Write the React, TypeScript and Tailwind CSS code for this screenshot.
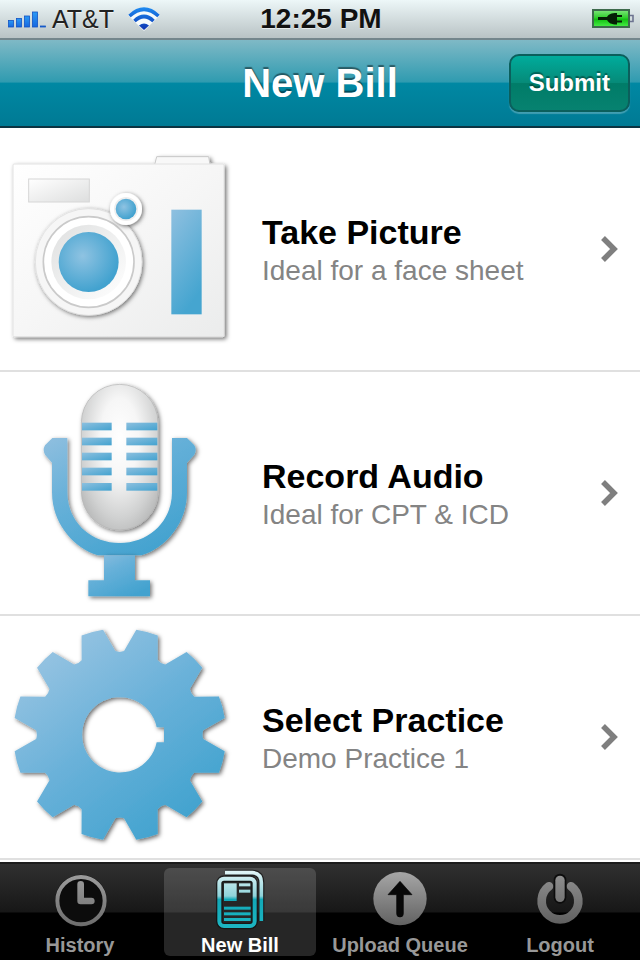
import type { ReactNode } from "react"

const GEAR_CENTER = 359

function gearPoint(radius: number, degrees: number) {
    const angle = (degrees * Math.PI) / 180
    const x = GEAR_CENTER + radius * Math.sin(angle)
    const y = GEAR_CENTER - radius * Math.cos(angle)
    return `${x.toFixed(1)} ${y.toFixed(1)}`
}

// twelve teeth, then the bore with its keyway cut out by even-odd fill
function gearPath() {
    let d = ""
    for (let i = 0; i < 12; i++) {
        const mid = 15 + i * 30
        d += `${i === 0 ? "M" : "L"}${gearPoint(319, mid - 6)}`
        d += `A319 319 0 0 1 ${gearPoint(319, mid + 6)}`
        d += `L${gearPoint(251, mid + 12)}`
        d += `Q${gearPoint(246, mid + 15)} ${gearPoint(251, mid + 18)}`
    }
    return d + "Z M470 337A113 113 0 1 0 470 382H492V337Z"
}

function CameraIcon() {
    return (
        <svg viewBox="0 -36 720 726" className="w-[240px] shrink-0" aria-hidden="true">
            <defs>
                <linearGradient id="camBody" x1="0" y1="0" x2="1" y2="1">
                    <stop offset="0" stopColor="#ffffff" />
                    <stop offset="0.5" stopColor="#f6f6f6" />
                    <stop offset="1" stopColor="#ebecec" />
                </linearGradient>
                <linearGradient id="camWindow" x1="0" y1="0" x2="1" y2="1">
                    <stop offset="0" stopColor="#ffffff" />
                    <stop offset="1" stopColor="#dddede" />
                </linearGradient>
                <linearGradient id="camGrip" x1="0" y1="0" x2="0.4" y2="1">
                    <stop offset="0" stopColor="#8fc0e0" />
                    <stop offset="1" stopColor="#45a5d0" />
                </linearGradient>
                <radialGradient id="camLens" cx="0.4" cy="0.4" r="0.6">
                    <stop offset="0" stopColor="#8fc3e2" />
                    <stop offset="1" stopColor="#42a2cf" />
                </radialGradient>
                <linearGradient id="camRing" x1="0" y1="0" x2="1" y2="1">
                    <stop offset="0" stopColor="#dfe0e0" />
                    <stop offset="1" stopColor="#ffffff" />
                </linearGradient>
                <filter id="camShadow" x="-10%" y="-10%" width="125%" height="125%">
                    <feDropShadow dx="6" dy="6" stdDeviation="6" floodColor="#000" floodOpacity="0.55" />
                </filter>
                <filter id="camSoft" x="-15%" y="-15%" width="135%" height="135%">
                    <feDropShadow dx="4" dy="4" stdDeviation="6" floodColor="#000" floodOpacity="0.55" />
                </filter>
            </defs>
            <g filter="url(#camShadow)">
                <path d="M464 74L470 50H626L630 74Z" fill="#f8f8f8" stroke="#c9c9c9" strokeWidth="3" />
                <rect x="39" y="72" width="633" height="518" rx="3" fill="url(#camBody)" stroke="#e2e2e2" strokeWidth="3" />
            </g>
            <rect x="86" y="117" width="182" height="69" fill="url(#camWindow)" stroke="#d6d6d6" strokeWidth="3" />
            <circle cx="266" cy="366" r="160" fill="#f6f6f6" stroke="#dcdcdc" strokeWidth="2" filter="url(#camSoft)" />
            <circle cx="266" cy="366" r="136" fill="#fff" stroke="#cacaca" strokeWidth="5" />
            <circle cx="378" cy="207" r="48" fill="#fff" filter="url(#camSoft)" />
            <circle cx="266" cy="366" r="112" fill="url(#camRing)" />
            <circle cx="266" cy="366" r="90" fill="url(#camLens)" />
            <circle cx="378" cy="207" r="36" fill="#eee" />
            <circle cx="378" cy="207" r="31" fill="url(#camLens)" />
            <rect x="514" y="209" width="91" height="314" fill="url(#camGrip)" />
        </svg>
    )
}

function MicrophoneIcon() {
    return (
        <svg viewBox="-60 6 720 726" className="w-[240px] shrink-0" aria-hidden="true">
            <defs>
                <linearGradient id="micBlue" x1="0" y1="0" x2="0.7" y2="1">
                    <stop offset="0" stopColor="#90bfdf" />
                    <stop offset="0.4" stopColor="#68b1d9" />
                    <stop offset="1" stopColor="#42a2cf" />
                </linearGradient>
                <radialGradient id="micHead" gradientUnits="userSpaceOnUse" cx="0" cy="0" r="1" gradientTransform="translate(299 205) scale(145 300)">
                    <stop offset="0" stopColor="#ffffff" />
                    <stop offset="0.4" stopColor="#f6f6f6" />
                    <stop offset="0.8" stopColor="#d0d1d1" />
                    <stop offset="1" stopColor="#b9baba" />
                </radialGradient>
                <linearGradient id="micSlot" x1="0" y1="0" x2="1" y2="1">
                    <stop offset="0" stopColor="#8dc0df" />
                    <stop offset="1" stopColor="#43a2cf" />
                </linearGradient>
                <filter id="micShadow" x="-10%" y="-10%" width="125%" height="125%">
                    <feDropShadow dx="5" dy="5" stdDeviation="6" floodColor="#000" floodOpacity="0.55" />
                </filter>
            </defs>
            <path d="M97 204H142V367C142 453 210 519 299 519S456 453 456 367V204H501L523 226Q531 240 523 254L501 278V367C501 458 440 532 365 556H233C158 532 96 458 96 367V278L75 254Q67 240 75 226Z" fill="url(#micBlue)" filter="url(#micShadow)" />
            <path d="M252 556H345V631H390V679H205V631H252Z" fill="url(#micBlue)" filter="url(#micShadow)" />
            <rect x="184" y="43" width="230" height="437" rx="115" fill="url(#micHead)" stroke="#b4b4b4" strokeWidth="2" filter="url(#micShadow)" />
            {[158, 203, 248, 293, 339].map((y) => (
                <g key={y} fill="url(#micSlot)">
                    <rect x="186" y={y} width="89" height="23" />
                    <rect x="319" y={y} width="93" height="23" />
                </g>
            ))}
        </svg>
    )
}

function GearIcon() {
    return (
        <svg viewBox="0 3 720 726" className="w-[240px] shrink-0" aria-hidden="true">
            <defs>
                <linearGradient id="gearBlue" x1="0.1" y1="0.1" x2="0.75" y2="0.95">
                    <stop offset="0" stopColor="#98c4e2" />
                    <stop offset="0.5" stopColor="#69b1d9" />
                    <stop offset="1" stopColor="#42a3cf" />
                </linearGradient>
                <filter id="gearShadow" x="-10%" y="-10%" width="120%" height="120%">
                    <feDropShadow dx="5" dy="5" stdDeviation="6" floodColor="#000" floodOpacity="0.6" />
                </filter>
            </defs>
            <path d={gearPath()} fillRule="evenodd" fill="url(#gearBlue)" filter="url(#gearShadow)" />
        </svg>
    )
}

function SignalIcon() {
    return (
        <svg viewBox="0 0 40 20" className="h-5 w-10" aria-hidden="true">
            <defs>
                <linearGradient id="signal" x1="0" y1="0" x2="0" y2="1">
                    <stop offset="0" stopColor="#2a9af5" />
                    <stop offset="1" stopColor="#1667e0" />
                </linearGradient>
            </defs>
            <g fill="url(#signal)" stroke="#1253c4" strokeWidth="0.8">
                <rect x="0.5" y="11.5" width="5" height="6.5" />
                <rect x="8.5" y="9.5" width="5" height="8.5" />
                <rect x="16.5" y="7" width="5" height="11" />
                <rect x="24.5" y="3" width="5" height="15" />
                <rect x="32.5" y="17" width="5" height="1" />
            </g>
        </svg>
    )
}

function WifiIcon() {
    return (
        <svg viewBox="0 0 32 24" className="h-6 w-8" aria-hidden="true">
            <defs>
                <linearGradient id="wifi" x1="0" y1="0" x2="0" y2="24" gradientUnits="userSpaceOnUse">
                    <stop offset="0" stopColor="#1e8cf2" />
                    <stop offset="1" stopColor="#0a2fae" />
                </linearGradient>
            </defs>
            <path d="M0 8Q16 -7 32 8L16 24Z" fill="#f5fafb" />
            <g fill="none" stroke="url(#wifi)" strokeWidth="3.6">
                <path d="M1.500 9Q16 -4.500 30.500 9" />
                <path d="M6.500 14Q16 5 25.500 14" />
            </g>
            <path d="M11 18.500Q16 14.500 21 18.500L16 23Z" fill="url(#wifi)" />
        </svg>
    )
}

function BatteryIcon() {
    return (
        <svg viewBox="0 0 44 22" className="h-[22px] w-11" aria-hidden="true">
            <defs>
                <linearGradient id="battery" x1="0" y1="0" x2="0" y2="1">
                    <stop offset="0" stopColor="#7fe67c" />
                    <stop offset="0.45" stopColor="#2fcf2c" />
                    <stop offset="0.55" stopColor="#12c012" />
                    <stop offset="1" stopColor="#4af04a" />
                </linearGradient>
            </defs>
            <rect x="3" y="2" width="36" height="17" fill="url(#battery)" stroke="#3d6a4c" strokeWidth="2" />
            <path d="M40 7.500H43V13.500H40" fill="none" stroke="#6d7390" strokeWidth="1.6" />
            <path d="M8 9H17C19 6 21 5 27 5V7H32V9H27V12.500H32V14.500H27V16.500C21 16.500 19 15 17 12H8Z" fill="#052005" />
        </svg>
    )
}

function ClockIcon() {
    return (
        <svg viewBox="144 54 192 192" className="size-16" aria-hidden="true">
            <defs>
                <linearGradient id="clock" gradientUnits="userSpaceOnUse" x1="0" y1="75" x2="0" y2="230">
                    <stop offset="0" stopColor="#9c9c9c" />
                    <stop offset="1" stopColor="#6c6c6c" />
                </linearGradient>
            </defs>
            <circle cx="243" cy="152" r="78" fill="#0c0c0c" />
            <g fill="none" stroke="url(#clock)">
                <circle cx="243" cy="152" r="71" strokeWidth="12" />
                <path d="M242 103V153H274" strokeWidth="20" strokeLinecap="round" strokeLinejoin="round" />
            </g>
        </svg>
    )
}

function NewsIcon() {
    return (
        <svg viewBox="624 54 192 192" className="size-16" aria-hidden="true">
            <defs>
                <linearGradient id="news" gradientUnits="userSpaceOnUse" x1="0" y1="62" x2="0" y2="235">
                    <stop offset="0" stopColor="#e2f6f8" />
                    <stop offset="0.44" stopColor="#8fd3da" />
                    <stop offset="0.5" stopColor="#12a9b8" />
                    <stop offset="1" stopColor="#1db5c2" />
                </linearGradient>
            </defs>
            <g fill="none" stroke="#101010" strokeOpacity="0.7" strokeLinejoin="round">
                <path d="M675 68H757Q784 70 784 98V213" strokeWidth="18" />
                <rect x="658" y="86" width="106" height="142" rx="14" strokeWidth="20" fill="#262626" />
            </g>
            <g fill="none" stroke="url(#news)">
                <path d="M675 68H757Q784 70 784 98V213" strokeWidth="11" />
                <rect x="658" y="86" width="106" height="142" rx="14" strokeWidth="12" />
            </g>
            <g fill="url(#news)">
                <rect x="672" y="100" width="38" height="53" />
                <rect x="717" y="100" width="34" height="9" />
                <rect x="717" y="119" width="34" height="9" />
                <rect x="672" y="170" width="80" height="9" />
                <rect x="672" y="187" width="80" height="9" />
                <rect x="672" y="204" width="80" height="9" />
            </g>
        </svg>
    )
}

function UploadIcon() {
    return (
        <svg viewBox="144 54 192 192" className="size-16" aria-hidden="true">
            <defs>
                <linearGradient id="upload" x1="0" y1="0" x2="0" y2="1">
                    <stop offset="0" stopColor="#a6a6a6" />
                    <stop offset="1" stopColor="#626262" />
                </linearGradient>
            </defs>
            <circle cx="240" cy="146" r="80" fill="url(#upload)" />
            <path d="M240 94L276 134H250V191Q250 201 240 201T230 191V134H204Z" fill="#080808" stroke="#080808" strokeWidth="2" strokeLinejoin="round" />
        </svg>
    )
}

function PowerIcon() {
    return (
        <svg viewBox="624 54 192 192" className="size-16" aria-hidden="true">
            <defs>
                <linearGradient id="power" gradientUnits="userSpaceOnUse" x1="0" y1="76" x2="0" y2="222">
                    <stop offset="0" stopColor="#8e8e8e" />
                    <stop offset="1" stopColor="#606060" />
                </linearGradient>
            </defs>
            <g fill="none" stroke="url(#power)" strokeLinecap="round">
                <path d="M687 109A55 55 0 1 0 753 109" strokeWidth="26" />
            </g>
            <path d="M720 90V142" fill="none" stroke="#0c0c0c" strokeWidth="38" strokeLinecap="round" />
            <rect x="706" y="77" width="28" height="79" rx="14" fill="url(#power)" />
        </svg>
    )
}

function Row({ icon, title, detail }: { icon: ReactNode; title: string; detail: string }) {
    return (
        <li className="border-b-2 border-[#e0e0e0]">
            <button type="button" className="flex w-full items-center text-left">
                {icon}
                <span className="ml-[22px] flex-1 pt-1">
                    <span className="block text-[34px] leading-10 font-bold text-black">{title}</span>
                    <span className="block text-[28px] leading-[38px] text-[#848484]">{detail}</span>
                </span>
                <svg viewBox="0 0 20 28" className="mr-5 h-7 w-5 shrink-0" aria-hidden="true">
                    <path d="M3 3L14 14L3 25" fill="none" stroke="#7f7f7f" strokeWidth="5.5" />
                </svg>
            </button>
        </li>
    )
}

function Tab({ icon, label, active = false }: { icon: ReactNode; label: string; active?: boolean }) {
    return (
        <button
            type="button"
            aria-current={active ? "page" : undefined}
            className={
                active
                    ? "mx-1 flex flex-col items-center rounded-md bg-white/15 text-white"
                    : "mx-1 flex flex-col items-center text-[#989898]"
            }
        >
            {icon}
            <span className="pt-0.5 text-[20px] leading-[22px] font-bold whitespace-nowrap">{label}</span>
        </button>
    )
}

export default function App() {
    return (
        <div className="flex min-h-screen flex-col bg-white font-['Liberation_Sans',Arial,sans-serif]">
            {/* Status bar */}
            <div className="grid h-10 grid-cols-3 items-center border-b-2 border-[#74868c] bg-linear-to-b from-[#edf7f8] to-[#b9c3c5] pr-1.5 pl-2">
                <div className="flex items-center">
                    <SignalIcon />
                    <span className="ml-1 text-[25px] leading-8 text-[#222] [text-shadow:0_1px_0_rgba(255,255,255,0.6)]">AT&amp;T</span>
                    <span className="ml-3.5">
                        <WifiIcon />
                    </span>
                </div>
                <span className="text-center text-[28px] leading-8 font-bold text-[#111] [text-shadow:0_1px_0_rgba(255,255,255,0.6)]">12:25 PM</span>
                <span className="justify-self-end">
                    <BatteryIcon />
                </span>
            </div>

            {/* Navigation bar */}
            <header className="grid h-[88px] grid-cols-[1fr_auto_1fr] items-center border-b-2 border-[#0c3442] bg-[linear-gradient(to_bottom,#7fb9c6_0%,#2f9bb0_49%,#0088a3_50%,#007a94_100%)] px-2.5">
                <h1 className="col-start-2 text-[40px] leading-none font-bold text-white [text-shadow:0_-2px_1px_rgba(0,0,0,0.45)]">New Bill</h1>
                <button
                    type="button"
                    className="h-[58px] justify-self-end rounded-[10px] border-2 border-[#0b5f5c] bg-[linear-gradient(to_bottom,#00ac9c_0%,#068a78_50%,#007c68_51%,#078270_100%)] px-[18px] text-[24px] leading-none font-bold text-white shadow-[0_2px_1px_rgba(255,255,255,0.25)] [text-shadow:0_-2px_1px_rgba(0,0,0,0.35)]"
                >
                    Submit
                </button>
            </header>

            {/* Actions */}
            <main className="flex-1">
                <ul>
                    <Row icon={<CameraIcon />} title="Take Picture" detail="Ideal for a face sheet" />
                    <Row icon={<MicrophoneIcon />} title="Record Audio" detail="Ideal for CPT &amp; ICD" />
                    <Row icon={<GearIcon />} title="Select Practice" detail="Demo Practice 1" />
                </ul>
            </main>

            {/* Tab bar */}
            <nav className="grid grid-cols-4 border-t-2 border-[#1c1c1c] bg-[linear-gradient(to_bottom,#303030_0%,#171717_50%,#000_51%)] pt-1 pb-1">
                <Tab icon={<ClockIcon />} label="History" />
                <Tab icon={<NewsIcon />} label="New Bill" active />
                <Tab icon={<UploadIcon />} label="Upload Queue" />
                <Tab icon={<PowerIcon />} label="Logout" />
            </nav>
        </div>
    )
}
